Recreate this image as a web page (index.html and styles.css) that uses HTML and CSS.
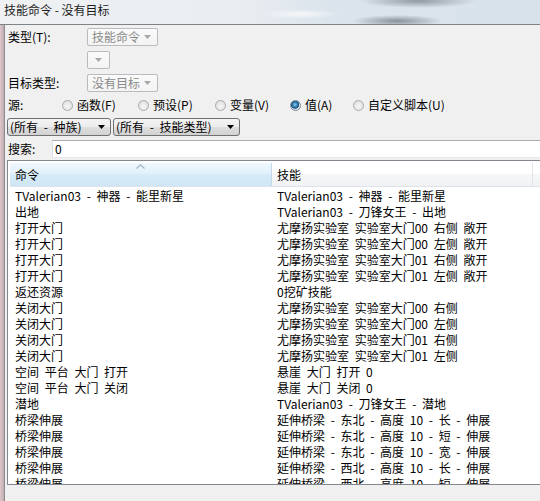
FILE: index.html
```html
<!DOCTYPE html>
<html lang="zh-CN">
<head>
<meta charset="utf-8">
<title>技能命令</title>
<link rel="stylesheet" href="styles.css">
</head>
<body>
<div class="titlebar">技能命令 - 没有目标</div>
<div class="main">
  <div class="edge"></div>
  <div class="window">
    <div class="row">
      <span class="label">类型(T):</span>
      <div class="combo wide"><span>技能命令</span><svg class="carrow" width="7" height="4" viewBox="0 0 7 4"><path d="M0 0H7L3.5 4Z"/></svg></div>
    </div>
    <div class="row gap5">
      <span class="label"></span>
      <div class="combo narrow"><svg class="carrow" width="7" height="4" viewBox="0 0 7 4"><path d="M0 0H7L3.5 4Z"/></svg></div>
    </div>
    <div class="row gap5">
      <span class="label">目标类型:</span>
      <div class="combo wide"><span>没有目标</span><svg class="carrow" width="7" height="4" viewBox="0 0 7 4"><path d="M0 0H7L3.5 4Z"/></svg></div>
    </div>
    <div class="radios">
      <span class="label">源:</span>
      <span class="radio"><i class="dot"></i>函数(F)</span>
      <span class="radio"><i class="dot"></i>预设(P)</span>
      <span class="radio"><i class="dot"></i>变量(V)</span>
      <span class="radio"><i class="dot on"></i>值(A)</span>
      <span class="radio"><i class="dot"></i>自定义脚本(U)</span>
    </div>
    <div class="filters">
      <div class="btn b1"><span>(所有 - 种族)</span><svg width="7" height="4" viewBox="0 0 7 4"><path d="M0 0H7L3.5 4Z"/></svg></div>
      <div class="btn b2"><span>(所有 - 技能类型)</span><svg width="7" height="4" viewBox="0 0 7 4"><path d="M0 0H7L3.5 4Z"/></svg></div>
    </div>
    <div class="search">
      <span class="slabel">搜索:</span>
      <div class="input">0</div>
    </div>
    <div class="list">
      <div class="lhead">
        <div class="hc c1 sorted">命令<svg class="sort" width="9" height="5" viewBox="0 0 9 5"><path d="M0.5 4.5L4.5 0.8L8.5 4.5" fill="none" stroke="#a3b4c6" stroke-width="1.2"/></svg></div>
        <div class="hc c2">技能</div>
        <div class="hc c3"></div>
      </div>
      <div class="rows">
        <div class="lrow"><span class="c1">TValerian03 - 神器 - 能里新星</span><span class="c2">TValerian03 - 神器 - 能里新星</span></div>
        <div class="lrow"><span class="c1">出地</span><span class="c2">TValerian03 - 刀锋女王 - 出地</span></div>
        <div class="lrow"><span class="c1">打开大门</span><span class="c2">尤摩扬实验室 实验室大门00 右侧 敞开</span></div>
        <div class="lrow"><span class="c1">打开大门</span><span class="c2">尤摩扬实验室 实验室大门00 左侧 敞开</span></div>
        <div class="lrow"><span class="c1">打开大门</span><span class="c2">尤摩扬实验室 实验室大门01 右侧 敞开</span></div>
        <div class="lrow"><span class="c1">打开大门</span><span class="c2">尤摩扬实验室 实验室大门01 左侧 敞开</span></div>
        <div class="lrow"><span class="c1">返还资源</span><span class="c2">0挖矿技能</span></div>
        <div class="lrow"><span class="c1">关闭大门</span><span class="c2">尤摩扬实验室 实验室大门00 右侧</span></div>
        <div class="lrow"><span class="c1">关闭大门</span><span class="c2">尤摩扬实验室 实验室大门00 左侧</span></div>
        <div class="lrow"><span class="c1">关闭大门</span><span class="c2">尤摩扬实验室 实验室大门01 右侧</span></div>
        <div class="lrow"><span class="c1">关闭大门</span><span class="c2">尤摩扬实验室 实验室大门01 左侧</span></div>
        <div class="lrow"><span class="c1">空间 平台 大门 打开</span><span class="c2">悬崖 大门 打开 0</span></div>
        <div class="lrow"><span class="c1">空间 平台 大门 关闭</span><span class="c2">悬崖 大门 关闭 0</span></div>
        <div class="lrow"><span class="c1">潜地</span><span class="c2">TValerian03 - 刀锋女王 - 潜地</span></div>
        <div class="lrow"><span class="c1">桥梁伸展</span><span class="c2">延伸桥梁 - 东北 - 高度 10 - 长 - 伸展</span></div>
        <div class="lrow"><span class="c1">桥梁伸展</span><span class="c2">延伸桥梁 - 东北 - 高度 10 - 短 - 伸展</span></div>
        <div class="lrow"><span class="c1">桥梁伸展</span><span class="c2">延伸桥梁 - 东北 - 高度 10 - 宽 - 伸展</span></div>
        <div class="lrow"><span class="c1">桥梁伸展</span><span class="c2">延伸桥梁 - 西北 - 高度 10 - 长 - 伸展</span></div>
        <div class="lrow"><span class="c1">桥梁伸展</span><span class="c2">延伸桥梁 - 西北 - 高度 10 - 短 - 伸展</span></div>
      </div>
    </div>
  </div>
</div>
</body>
</html>
```
FILE: styles.css
```css
* { box-sizing: border-box; }
html, body {
  margin: 0;
  padding: 0;
  width: 540px;
  height: 501px;
  overflow: hidden;
  background: #f0f0f0;
  font-family: "Noto Sans CJK SC", "Noto Sans", sans-serif;
  font-size: 12px;
  color: #000;
}
.titlebar {
  height: 24px;
  padding: 2px 0 0 4px;
  line-height: 16px;
  font-size: 12px;
  color: #1b1b1b;
  background:
    radial-gradient(ellipse 58px 7px at 418px 1px, rgba(85,92,102,0.55), rgba(85,92,102,0) 100%),
    radial-gradient(ellipse 45px 6px at 397px 21px, rgba(70,78,88,0.55), rgba(70,78,88,0) 100%),
    radial-gradient(ellipse 40px 5px at 300px 14px, rgba(255,255,255,0.7), rgba(255,255,255,0) 100%),
    linear-gradient(to right, #eff1f3 0px, #e9edf1 240px, #dbe4ec 330px, #d8e2eb 540px);
  white-space: nowrap;
}
.main {
  display: flex;
  height: 477px;
  border-top: 1px solid #7f8287;
}
.edge {
  width: 4px;
  flex: none;
  background: linear-gradient(to right, #dcc6ca, #cbb5ba 70%, #b9a9ad);
}
.window {
  flex: 1;
  border-left: 1px solid #8d8d8f;
  padding: 3px 0 0 2px;
  display: flex;
  flex-direction: column;
  min-width: 0;
}
.row {
  display: flex;
  align-items: center;
  height: 18px;
}
.gap5 { margin-top: 5px; }
.row + .gap5 + .gap5 { margin-top: 5px; }
.label {
  width: 80px;
  flex: none;
  padding-left: 1px;
  line-height: 16px;
  white-space: nowrap;
}
.combo {
  height: 18px;
  border: 1px solid #b9bcbf;
  border-radius: 2px;
  background: linear-gradient(#fafafa, #f3f3f3);
  display: flex;
  align-items: center;
  color: #8a8a8a;
  padding-left: 4px;
  position: relative;
}
.combo.wide { width: 71px; justify-content: space-between; padding-right: 6px; }
.combo.narrow { width: 23px; justify-content: center; padding-left: 0; }
.combo span { line-height: 16px; }
.carrow path { fill: #a8a8a8; }
.radios {
  margin-top: 5px;
  height: 16px;
  display: grid;
  grid-template-columns: 55px 76px 77px 75px 63px auto;
  align-items: center;
  white-space: nowrap;
}
.radios .label { width: auto; }
.radio {
  display: flex;
  align-items: center;
  line-height: 16px;
}
.dot {
  width: 11px;
  height: 11px;
  border-radius: 50%;
  border: 1px solid #a7abaf;
  background: radial-gradient(circle at 50% 60%, #f7f7f7 0, #e4e4e4 60%, #d6d6d6 100%);
  margin-right: 4px;
  flex: none;
}
.dot.on {
  border-color: #7b8a98;
  background: radial-gradient(circle at 45% 40%, #8ecdf0 0, #2d79ad 35%, #1b4f7a 52%, #dfe3e6 60%, #eef0f2 100%);
}
.filters {
  margin-top: 5px;
  display: flex;
  gap: 2px;
  height: 18px;
}
.btn {
  height: 18px;
  border: 1px solid #707070;
  border-radius: 3px;
  background: linear-gradient(#f4f4f4 0, #ececec 50%, #dedede 51%, #d2d2d2 100%);
  display: flex;
  align-items: center;
  justify-content: space-between;
  padding: 0 5px 0 2px;
  white-space: nowrap;
  word-spacing: 3px;
}
.btn span { line-height: 16px; }
.btn path { fill: #000; }
.b1 { width: 104px; }
.b2 { width: 127px; }
.search {
  margin-top: 4px;
  display: flex;
  align-items: center;
  height: 18px;
}
.slabel {
  width: 45px;
  flex: none;
  padding-left: 1px;
  line-height: 16px;
}
.input {
  flex: 1;
  height: 18px;
  border-top: 1px solid #abadb3;
  border-left: 1px solid #dbdfe6;
  border-bottom: 1px solid #e3e9ef;
  background: #fff;
  padding-left: 2px;
  line-height: 16px;
}
.list {
  margin-top: 2px;
  height: 325px;
  border: 1px solid #828790;
  border-right: none;
  background: #fff;
  padding: 2px 0 0 2px;
  overflow: hidden;
  display: flex;
  flex-direction: column;
}
.lhead {
  display: flex;
  height: 24px;
  flex: none;
  border-bottom: 1px solid #dde3e9;
}
.hc {
  height: 23px;
  line-height: 24px;
  padding-left: 5px;
  border-right: 1px solid #e1e5ea;
  background: linear-gradient(#ffffff 0, #ffffff 45%, #f6f7f8 50%, #f1f2f4 100%);
  position: relative;
}
.hc.sorted {
  background: linear-gradient(#eef7fd 0, #e3f1fb 45%, #d7ebf8 50%, #cfe6f6 100%);
  border-right-color: #c3d8e8;
}
.c1 { width: 262px; flex: none; }
.c2 { width: 261px; flex: none; }
.c3 { flex: 1; border-right: none; }
.sort {
  position: absolute;
  left: 126px;
  top: 1px;
}
.rows { padding-top: 1px; }
.lrow {
  display: flex;
  height: 16px;
  line-height: 16px;
  white-space: nowrap;
  word-spacing: 3px;
}
.lrow span { padding-left: 5px; overflow: hidden; }
```
